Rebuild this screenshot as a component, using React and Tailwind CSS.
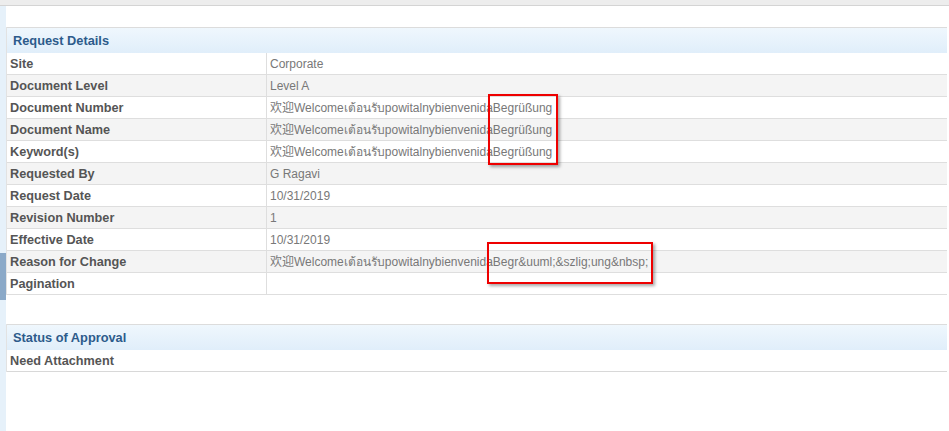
const MIX = '欢迎Welcomeเต้อนรับpowitalnybienvenida';

const ROWS = [
  ['Site', 'Corporate'],
  ['Document Level', 'Level A'],
  ['Document Number', MIX + 'Begrüßung'],
  ['Document Name', MIX + 'Begrüßung'],
  ['Keyword(s)', MIX + 'Begrüßung'],
  ['Requested By', 'G Ragavi'],
  ['Request Date', '10/31/2019'],
  ['Revision Number', '1'],
  ['Effective Date', '10/31/2019'],
  ['Reason for Change', MIX + 'Begr&uuml;&szlig;ung&nbsp;'],
  ['Pagination', ''],
];

function PanelHeader({ title }) {
  return (
    <div className="h-[26px] border-t border-[#dcdcdc] bg-gradient-to-b from-[#eff7fd] to-[#e0eefa] flex items-center pl-[6px]">
      <span className="text-[12.8px] font-bold text-[#2d5b8b]">{title}</span>
    </div>
  );
}

export default function App() {
  return (
    <div className="relative min-h-[431px] bg-white font-['Liberation_Sans','Noto_Sans','Noto_Sans_CJK_SC',sans-serif]">
      <div className="h-[6px] bg-[#ededed] border-b border-[#d4d4d4]" />
      <div className="flex">
        <div className="w-[6px] shrink-0 bg-[#e6f1fa] flex flex-col min-h-[425px]">
          <div className="h-[247px]" />
          <div className="h-[47px] bg-[#8ba9c8]" />
        </div>
        <div className="flex-1 mr-[2px]">
          <div className="h-[21px]" />
          <div className="border-l border-[#e2e2e2]">
            <PanelHeader title="Request Details" />
            {ROWS.map(([label, value], i) => (
              <div
                key={label}
                className={`flex h-[22px] border-b border-[#dedede] ${i % 2 === 1 ? 'bg-[#f4f4f4]' : 'bg-white'}`}
              >
                <div className="w-[260px] shrink-0 border-r border-[#dedede] pl-[3px] pt-[2px] flex items-center text-[12.7px] font-bold text-[#555555]">
                  {label}
                </div>
                <div className="flex-1 pl-[3px] flex items-center text-[12px] text-[#787878] whitespace-nowrap">
                  {value}
                </div>
              </div>
            ))}
          </div>
          <div className="h-[29px]" />
          <div className="border-l border-[#e2e2e2]">
            <PanelHeader title="Status of Approval" />
            <div className="h-[22px] border-b border-[#d8d8d8] pl-[3px] pt-[2px] flex items-center text-[12.7px] font-bold text-[#555555]">
              Need Attachment
            </div>
          </div>
        </div>
      </div>
      <div className="absolute left-[488px] top-[94px] w-[70px] h-[71px] border-2 border-[#ee0000] shadow-[2px_2px_3px_rgba(0,0,0,0.35)]" />
      <div className="absolute left-[487px] top-[242px] w-[166px] h-[42px] border-2 border-[#ee0000] shadow-[2px_2px_3px_rgba(0,0,0,0.35)]" />
    </div>
  );
}
